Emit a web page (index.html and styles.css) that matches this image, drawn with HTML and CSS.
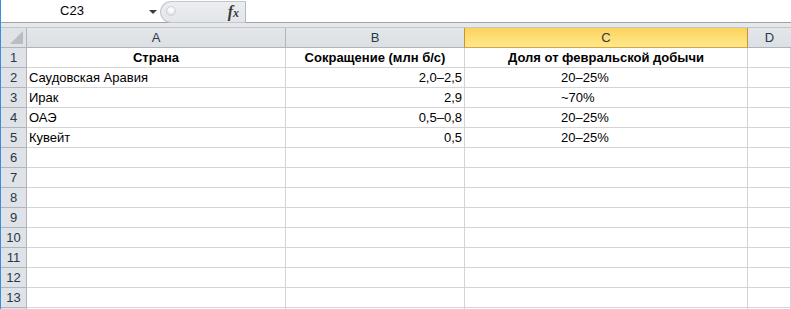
FILE: index.html
```html
<!DOCTYPE html>
<html>
<head>
<meta charset="utf-8">
<link rel="stylesheet" href="styles.css">
</head>
<body>
<div class="app">
  <div class="fbar">
    <div class="namebox"><span class="name">C23</span><span class="arrow"></span></div>
    <div class="fxwrap"><span class="knob"></span><span class="fx"><i class="f">f</i><i class="x">x</i></span></div>
    <div class="finput"></div>
  </div>
  <div class="gap"></div>
  <div class="sheet">
    <div class="corner"><span class="tri"></span></div>
    <div class="ch">A</div>
    <div class="ch">B</div>
    <div class="ch sel">C</div>
    <div class="ch last">D</div>

    <div class="rh">1</div>
    <div class="c b center">Страна</div>
    <div class="c b center">Сокращение (млн б/с)</div>
    <div class="c b center">Доля от февральской добычи</div>
    <div class="c"></div>

    <div class="rh">2</div>
    <div class="c">Саудовская Аравия</div>
    <div class="c right">2,0–2,5</div>
    <div class="c ind">20–25%</div>
    <div class="c"></div>

    <div class="rh">3</div>
    <div class="c">Ирак</div>
    <div class="c right">2,9</div>
    <div class="c ind">~70%</div>
    <div class="c"></div>

    <div class="rh">4</div>
    <div class="c">ОАЭ</div>
    <div class="c right">0,5–0,8</div>
    <div class="c ind">20–25%</div>
    <div class="c"></div>

    <div class="rh">5</div>
    <div class="c">Кувейт</div>
    <div class="c right">0,5</div>
    <div class="c ind">20–25%</div>
    <div class="c"></div>

    <div class="rh">6</div><div class="c"></div><div class="c"></div><div class="c"></div><div class="c"></div>
    <div class="rh">7</div><div class="c"></div><div class="c"></div><div class="c"></div><div class="c"></div>
    <div class="rh">8</div><div class="c"></div><div class="c"></div><div class="c"></div><div class="c"></div>
    <div class="rh">9</div><div class="c"></div><div class="c"></div><div class="c"></div><div class="c"></div>
    <div class="rh">10</div><div class="c"></div><div class="c"></div><div class="c"></div><div class="c"></div>
    <div class="rh">11</div><div class="c"></div><div class="c"></div><div class="c"></div><div class="c"></div>
    <div class="rh">12</div><div class="c"></div><div class="c"></div><div class="c"></div><div class="c"></div>
    <div class="rh">13</div><div class="c"></div><div class="c"></div><div class="c"></div><div class="c"></div>
    <div class="rh"></div><div class="c"></div><div class="c"></div><div class="c"></div><div class="c"></div>
  </div>
</div>
</body>
</html>
```

FILE: styles.css
```css
html, body {
  margin: 0;
  padding: 0;
  background: #ffffff;
}
.app {
  width: 791px;
  height: 309px;
  overflow: hidden;
  border-left: 1px solid #3b8ede;
  box-sizing: border-box;
  font-family: "Liberation Sans", Arial, sans-serif;
  font-size: 13px;
  color: #000;
}
.fbar {
  display: flex;
  height: 22px;
  border-bottom: 1px solid #9fa3a8;
  background: #fff;
}
.namebox {
  width: 159px;
  flex: none;
  display: flex;
  align-items: center;
}
.name {
  width: 142px;
  text-align: center;
  line-height: 22px;
}
.arrow {
  margin-left: 6px;
  width: 0;
  height: 0;
  border-left: 4px solid transparent;
  border-right: 4px solid transparent;
  border-top: 4px solid #3c3c3c;
  margin-top: 2px;
}
.fxwrap {
  flex: none;
  width: 73px;
  margin-top: 1px;
  height: 20px;
  border: 1px solid #c3c7cc;
  border-right: 1px solid #b5b9bf;
  border-radius: 11px 0 0 11px;
  background: linear-gradient(#eceef1, #e2e5e9);
  display: flex;
  align-items: center;
  justify-content: space-between;
  padding: 0 6px 0 5px;
  box-sizing: content-box;
}
.knob {
  width: 8px;
  height: 8px;
  border-radius: 50%;
  background: radial-gradient(circle at 50% 35%, #ffffff 0, #f4f5f7 40%, #c9cdd2 100%);
  border: 1px solid #cfd3d8;
  margin-top: -2px;
}
.fx {
  font-family: "Liberation Serif", "Times New Roman", serif;
  font-weight: bold;
  color: #3a3a3a;
  line-height: 1;
}
.fx .f {
  font-size: 16px;
}
.fx .x {
  font-size: 12px;
}
.finput {
  flex: 1;
  background: #fff;
}
.gap {
  height: 4px;
  background: #e6e8eb;
  border-bottom: 1px solid #c2c6cb;
}
.sheet {
  display: grid;
  grid-template-columns: 26px 259px 179px 283px 1fr;
  grid-auto-rows: 20px;
}
.sheet > div {
  box-sizing: border-box;
  border-right: 1px solid #d4d4d4;
  border-bottom: 1px solid #d4d4d4;
  line-height: 19px;
  white-space: nowrap;
  overflow: hidden;
}
.sheet > .corner {
  background: #dfe2e6;
  border-right: 1px solid #b1b5ba;
  border-bottom: 1px solid #b1b5ba;
  position: relative;
}
.tri {
  position: absolute;
  right: 3px;
  bottom: 3px;
  width: 0;
  height: 0;
  border-left: 13px solid transparent;
  border-bottom: 13px solid #b9bdc3;
}
.sheet > .ch {
  background: linear-gradient(#e4e7ea, #dcdfe3);
  border-right: 1px solid #b1b5ba;
  border-bottom: 1px solid #b1b5ba;
  text-align: center;
  color: #27384b;
}
.sheet > .ch.sel {
  background: linear-gradient(#fdd25c, #ffe98c);
  border-right: 1px solid #c69441;
  border-bottom: 1px solid #d9a347;
  border-left: 1px solid #c69441;
  margin-left: -1px;
  color: #2a3a4c;
}
.sheet > .ch.last {
  border-right: none;
}
.sheet > .rh {
  background: #dfe2e6;
  border-right: 1px solid #b1b5ba;
  border-bottom: 1px solid #b1b5ba;
  text-align: center;
  color: #27384b;
}
.c {
  padding: 0 2px;
}
.b {
  font-weight: bold;
}
.center {
  text-align: center;
}
.right {
  text-align: right;
}
.sheet > .ind {
  padding-left: 96px;
}
```
